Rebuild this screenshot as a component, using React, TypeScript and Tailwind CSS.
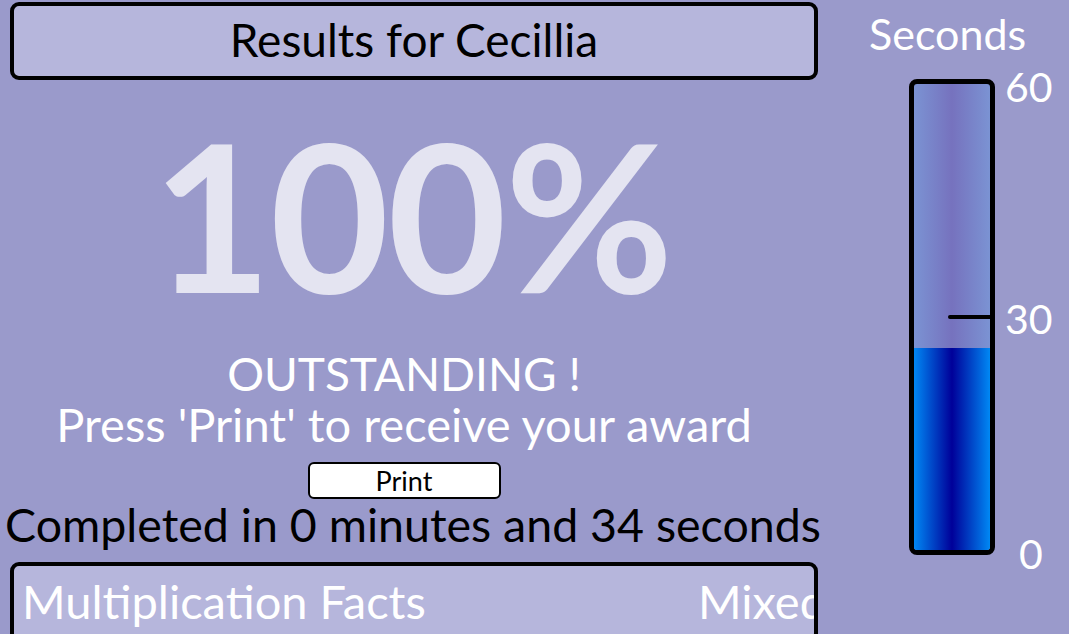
import React from 'react';

const Thermometer: React.FC<{ remaining: number }> = ({ remaining }) => {
    const pct = Math.min(remaining / 60, 1) * 100;
    return (
        <div className="flex items-stretch">
            <div className="relative w-[86px] h-[476px] border-[5px] border-black rounded-[8px] overflow-hidden bg-[linear-gradient(to_right,#7b93d3,#7672be_50%,#7b93d3)]">
                <div
                    className="absolute bottom-0 left-0 right-0 bg-[linear-gradient(to_right,#0088f4,#000099_50%,#0088f4)]"
                    style={{ height: `${pct}%` }}
                ></div>
                {/* 30 second tick */}
                <div className="absolute right-0 top-[231px] w-[42px] h-[4px] bg-black rounded-l-full"></div>
            </div>
            <div className="relative w-[70px] text-white text-[41px] leading-none">
                <span className="absolute left-[10px] top-[-13px]">60</span>
                <span className="absolute left-[10px] top-[219px]">30</span>
                <span className="absolute left-[24px] top-[454px]">0</span>
            </div>
        </div>
    );
};

export default function App() {
    return (
        <div className="w-[1069px] h-[634px] overflow-hidden bg-[#9a9acb] flex font-['Lato',sans-serif]">
            {/* left side */}
            <div className="w-[828px] shrink-0 flex flex-col pt-[2px]">
                <div className="shrink-0 w-[808px] ml-[10px] h-[78px] bg-[#b6b6dc] border-[4px] border-black rounded-[9px] flex items-center justify-center">
                    <span className="text-black text-[46px] leading-none -mt-[2px]">Results for Cecillia</span>
                </div>

                <div className="shrink-0 w-[808px] flex flex-col items-center">
                    <div className="shrink-0 mt-[31px] h-[170px] text-[#e4e4f1] text-[206px] leading-none font-bold tracking-[-2px] ml-[16px]">
                        100%
                    </div>

                    <div className="shrink-0 mt-[68px] text-white text-[46px] leading-[50px] text-center whitespace-nowrap">
                        <div>OUTSTANDING !</div>
                        <div className="text-[47px]">Press 'Print' to receive your award</div>
                    </div>

                    <button className="mt-[13px] w-[193px] h-[37px] shrink-0 bg-white border-2 border-black rounded-[6px] text-black text-[27px] leading-none">
                        Print
                    </button>

                    <div className="shrink-0 mt-0 text-black text-[46.5px] leading-[50px] whitespace-nowrap ml-[18px]">
                        Completed in 0 minutes and 34 seconds
                    </div>
                </div>

                <div className="shrink-0 mt-[13px] w-[808px] ml-[10px] h-[80px] bg-[#b6b6dc] border-[4px] border-black rounded-[9px] flex items-start justify-between pl-[8px] pt-[12px] overflow-hidden">
                    <span className="text-white text-[47px] leading-none">Multiplication Facts</span>
                    <span className="text-white text-[47px] leading-none -mr-[12px]">Mixed</span>
                </div>
            </div>

            {/* right side */}
            <div className="flex-1 flex flex-col items-start pl-[81px] pt-[12px]">
                <div className="text-white text-[43px] leading-none -ml-[40px]">Seconds</div>
                <div className="mt-[24px]">
                    <Thermometer remaining={26} />
                </div>
            </div>
        </div>
    );
}
